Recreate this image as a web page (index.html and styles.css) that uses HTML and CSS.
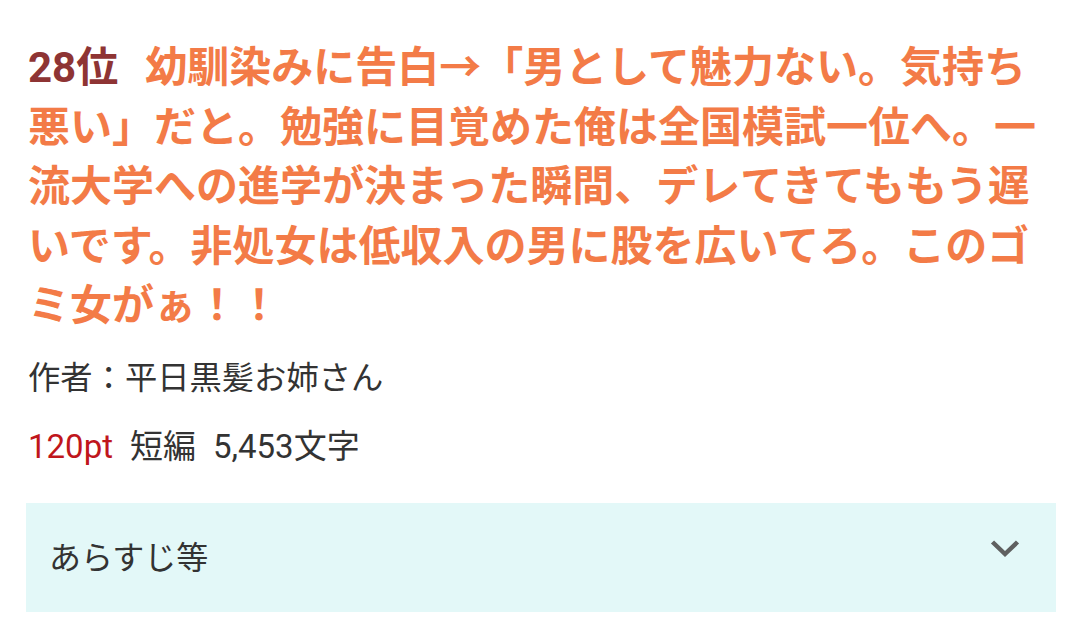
FILE: index.html
```html
<!DOCTYPE html>
<html lang="ja">
<head>
<meta charset="utf-8">
<title>ランキング</title>
<link rel="stylesheet" href="styles.css">
</head>
<body>
<article class="rank-item">
  <h2 class="rank-title"><span class="rank-no">28位</span><a class="title-link" href="#">幼馴染みに告白→「男として魅力ない。気持ち悪い」だと。勉強に目覚めた俺は全国模試一位へ。一流大学への進学が決まった瞬間、デレてきてももう遅いです。非処女は低収入の男に股を広いてろ。このゴミ女がぁ！！</a></h2>
  <p class="author">作者：平日黒髪お姉さん</p>
  <p class="meta"><span class="pt">120pt</span><span>短編</span><span>5,453文字</span></p>
  <div class="summary">
    <span class="summary-label">あらすじ等</span>
    <svg class="chevron" width="30" height="20" viewBox="0 0 30 20" aria-hidden="true">
      <path d="M2.5 3 L15 15 L27.5 3" fill="none" stroke="#5f6060" stroke-width="4.5"/>
    </svg>
  </div>
</article>
</body>
</html>
```

FILE: styles.css
```css
html, body {
  margin: 0;
  padding: 0;
  background: #ffffff;
}

body {
  font-family: Roboto, "Noto Sans CJK JP", sans-serif;
  color: #333333;
}

.rank-item {
  padding: 38px 22px 0 26px;
}

.rank-title {
  margin: 0;
  padding-left: 2px;
  font-size: 42px;
  line-height: 59.5px;
  font-weight: 700;
}

.rank-no {
  color: #8e3434;
  margin-right: 27px;
}

.title-link {
  color: #f37b47;
  text-decoration: none;
}

.author {
  margin: 20px 0 0 2px;
  font-size: 32.3px;
  line-height: 44px;
  color: #333333;
}

.meta {
  display: flex;
  gap: 17px;
  margin: 25px 0 0 2px;
  font-size: 33px;
  line-height: 44px;
  color: #333333;
}

.meta .pt {
  color: #c0161c;
}

.summary {
  display: flex;
  align-items: center;
  justify-content: space-between;
  margin: 34px 0 0 0;
  width: 1030px;
  height: 109px;
  box-sizing: border-box;
  padding: 0 36px 0 23px;
  background: #e3f8f8;
}

.summary-label {
  font-size: 32px;
  line-height: 44px;
  color: #333333;
  padding-top: 2px;
}

.chevron {
  display: block;
  margin-top: -16px;
}
```
